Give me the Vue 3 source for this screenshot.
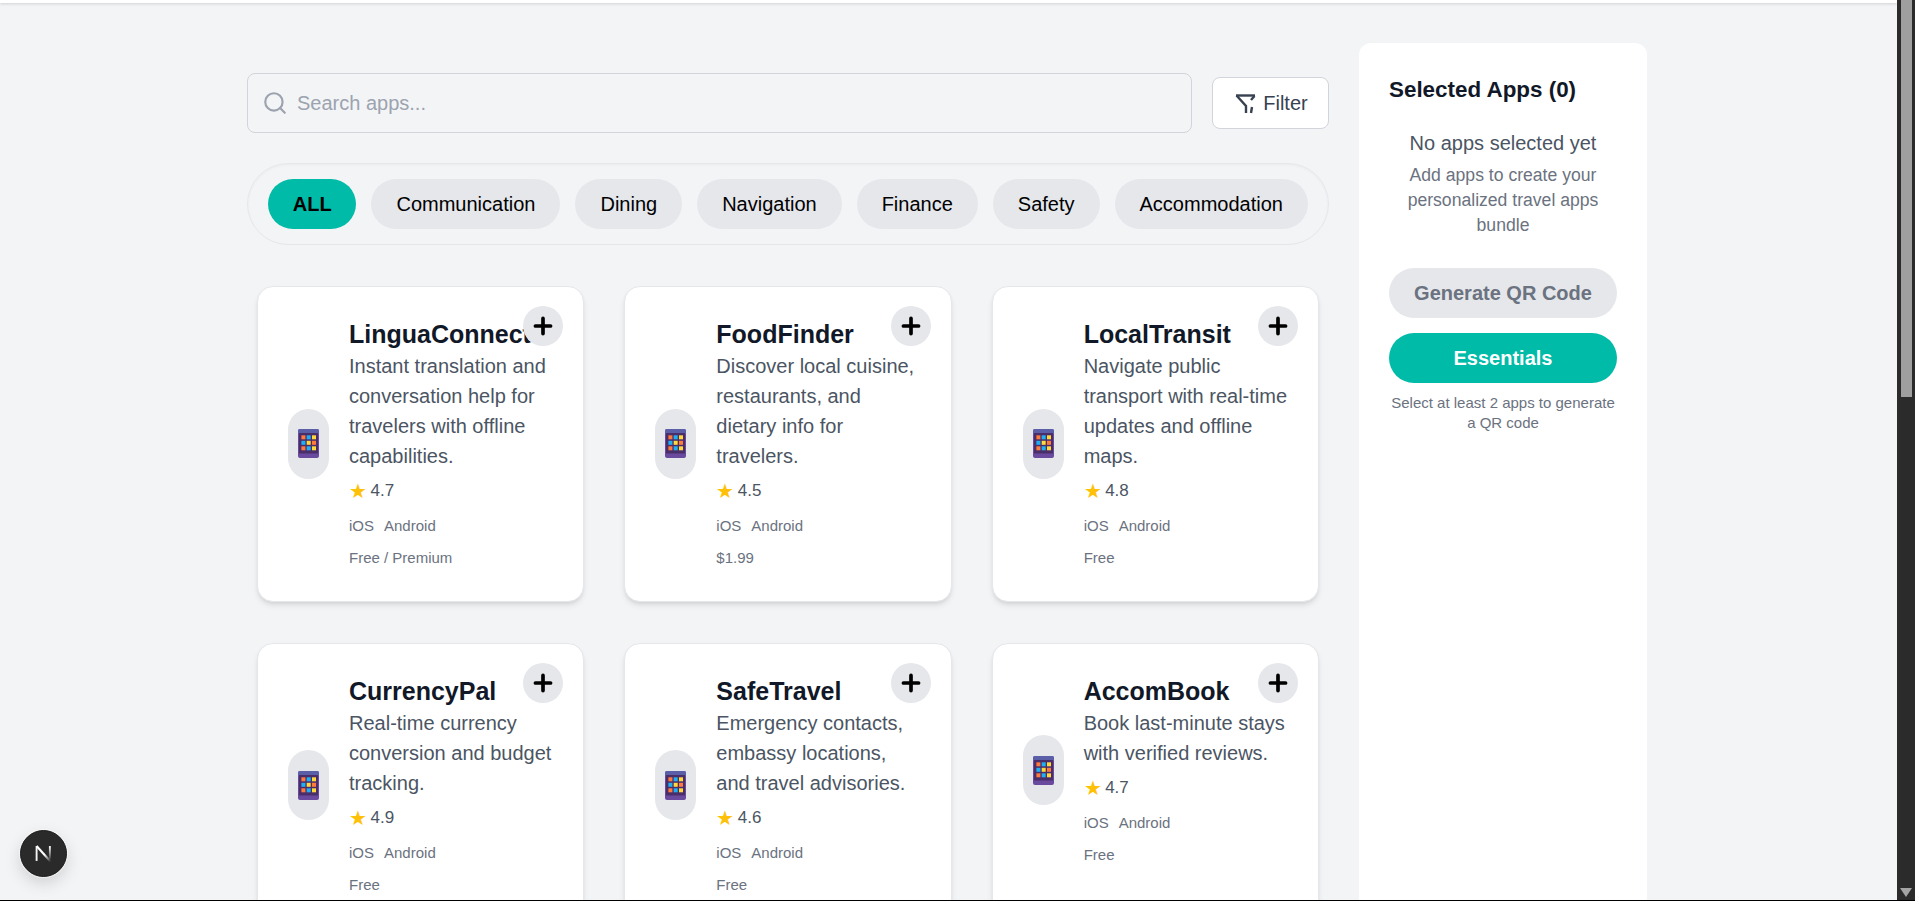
<template>
  <div class="screen">
    <div class="page">
      <div class="topbar"></div>
      <main class="layout">
        <section class="content">
          <div class="search-row">
            <label class="search">
              <svg class="search-icon" viewBox="0 0 24 24" fill="none" stroke="currentColor" stroke-width="2" stroke-linecap="round" stroke-linejoin="round">
                <circle cx="11" cy="11" r="8" />
                <path d="m21 21-4.3-4.3" />
              </svg>
              <input type="text" placeholder="Search apps..." />
            </label>
            <button class="filter">
              <svg viewBox="0 0 24 24" fill="none" stroke="currentColor" stroke-width="2.4">
                <path d="M3 4.5h19" />
                <path d="M3.5 4.5 13 15v7" />
                <path d="M21.5 5 18 9" />
                <path d="M19 16l-1 6" />
              </svg>
              Filter
            </button>
          </div>

          <div class="categories">
            <button
              v-for="(cat, i) in categories"
              :key="cat"
              class="category"
              :class="{ active: i === 0 }"
            >{{ cat }}</button>
          </div>

          <div class="grid">
            <article v-for="app in apps" :key="app.name" class="card">
              <button class="add">
                <svg viewBox="0 0 24 24" fill="none" stroke="currentColor" stroke-width="3.4" stroke-linecap="round">
                  <path d="M5 12h14M12 5v14" />
                </svg>
              </button>
              <div class="card-body">
                <div class="app-icon">
                  <svg viewBox="0 0 21 29" width="21" height="29">
                    <rect width="21" height="29" rx="2" fill="#6a4a9e" />
                    <path d="M0 5V2a2 2 0 0 1 2-2h17a2 2 0 0 1 2 2v3z" fill="#5a5fa8" />
                    <rect x="1" y="4" width="19" height="20.5" fill="#4a2e6a" />
                    <g v-for="(row, r) in tiles" :key="r">
                      <rect
                        v-for="(color, c) in row"
                        :key="c"
                        :x="3.4 + c * 5.3"
                        :y="6.3 + r * 5.5"
                        width="4"
                        height="4"
                        :fill="color"
                      />
                    </g>
                  </svg>
                </div>
                <div class="info">
                  <h3 class="name">{{ app.name }}</h3>
                  <p class="desc">{{ app.desc }}</p>
                  <div class="rating"><span class="star">★</span>{{ app.rating }}</div>
                  <div class="platforms"><span>iOS</span><span>Android</span></div>
                  <div class="price">{{ app.price }}</div>
                </div>
              </div>
            </article>
          </div>
        </section>

        <aside class="sidebar">
          <h2 class="side-title">Selected Apps (0)</h2>
          <div class="empty">
            <p class="empty-title">No apps selected yet</p>
            <p class="empty-text">Add apps to create your personalized travel apps bundle</p>
          </div>
          <button class="side-btn disabled">Generate QR Code</button>
          <button class="side-btn primary">Essentials</button>
          <p class="hint">Select at least 2 apps to generate a QR code</p>
        </aside>
      </main>
    </div>

    <div class="scrollbar">
      <div class="thumb"></div>
      <div class="arrow"></div>
    </div>

    <div class="next-badge">
      <svg viewBox="0 0 16 16" width="17" height="17" fill="none">
        <defs>
          <linearGradient id="nfade" x1="4" y1="3" x2="14" y2="15" gradientUnits="userSpaceOnUse">
            <stop offset="0.5" stop-color="#fff" />
            <stop offset="1" stop-color="#fff" stop-opacity="0.1" />
          </linearGradient>
          <linearGradient id="nfade2" x1="14" y1="1" x2="14" y2="13" gradientUnits="userSpaceOnUse">
            <stop offset="0" stop-color="#fff" />
            <stop offset="1" stop-color="#fff" stop-opacity="0.15" />
          </linearGradient>
        </defs>
        <path d="M1.5 1v14" stroke="#f2f2f2" stroke-width="1.8" />
        <path d="M1.5 1 14.5 15.5" stroke="url(#nfade)" stroke-width="2" />
        <path d="M14 1v12" stroke="url(#nfade2)" stroke-width="1.8" />
      </svg>
    </div>
  </div>
</template>

<script setup>
const categories = ['ALL', 'Communication', 'Dining', 'Navigation', 'Finance', 'Safety', 'Accommodation']

const tiles = [
  ['#ff7a3d', '#1eb0f5', '#ffd83a'],
  ['#1eb0f5', '#ffd83a', '#ff7a3d'],
  ['#ff7a3d', '#1eb0f5', '#ffd83a']
]

const apps = [
  {
    name: 'LinguaConnect',
    desc: 'Instant translation and conversation help for travelers with offline capabilities.',
    rating: 4.7,
    price: 'Free / Premium'
  },
  {
    name: 'FoodFinder',
    desc: 'Discover local cuisine, restaurants, and dietary info for travelers.',
    rating: 4.5,
    price: '$1.99'
  },
  {
    name: 'LocalTransit',
    desc: 'Navigate public transport with real-time updates and offline maps.',
    rating: 4.8,
    price: 'Free'
  },
  {
    name: 'CurrencyPal',
    desc: 'Real-time currency conversion and budget tracking.',
    rating: 4.9,
    price: 'Free'
  },
  {
    name: 'SafeTravel',
    desc: 'Emergency contacts, embassy locations, and travel advisories.',
    rating: 4.6,
    price: 'Free'
  },
  {
    name: 'AccomBook',
    desc: 'Book last-minute stays with verified reviews.',
    rating: 4.7,
    price: 'Free'
  }
]
</script>

<style>
html,
body {
  margin: 0;
  height: 100%;
  overflow: hidden;
}
</style>

<style scoped>
.screen {
  display: flex;
  height: 900px;
  border-bottom: 1px solid #000;
  overflow: hidden;
  background: #f3f4f6;
  font-family: "Liberation Sans", Arial, sans-serif;
}

.page {
  flex: 1;
  min-width: 0;
  overflow: hidden;
}

.topbar {
  height: 3px;
  background: #fff;
  box-shadow: 0 1px 3px rgba(0, 0, 0, 0.15);
}

.layout {
  display: flex;
  gap: 30px;
  width: 1400px;
  margin-left: 247px;
  padding-top: 40px;
}

.content {
  width: 1082px;
  flex: none;
}

.search-row {
  display: flex;
  align-items: center;
  gap: 20px;
  padding-top: 30px;
}

.search {
  flex: 1;
  height: 60px;
  box-sizing: border-box;
  display: flex;
  align-items: center;
  gap: 9px;
  padding-left: 14px;
  border: 1px solid #d1d5db;
  border-radius: 8px;
}

.search-icon {
  width: 26px;
  height: 26px;
  color: #9ca3af;
  flex: none;
}

.search input {
  flex: 1;
  border: none;
  outline: none;
  padding: 0 2px 0 0;
  background: transparent;
  font-family: inherit;
  font-size: 20px;
  color: #111827;
}

.search input::placeholder {
  color: #9ca3af;
}

.filter {
  width: 117px;
  height: 52px;
  display: flex;
  align-items: center;
  justify-content: center;
  gap: 6px;
  padding: 0;
  background: #fff;
  border: 1px solid #d1d5db;
  border-radius: 8px;
  font-family: inherit;
  font-size: 20px;
  color: #374151;
}

.filter svg {
  width: 24px;
  height: 24px;
}

.categories {
  display: flex;
  gap: 15px;
  margin-top: 30px;
  padding: 15px 20px;
  border: 1px solid #e5e7eb;
  border-radius: 41px;
  background: #f3f4f6;
  box-shadow: inset 0 1px 3px rgba(0, 0, 0, 0.04);
}

.category {
  height: 50px;
  padding: 0 25px;
  border: none;
  border-radius: 25px;
  background: #e5e7eb;
  font-family: inherit;
  font-size: 20px;
  color: #000;
  white-space: nowrap;
}

.category.active {
  padding: 0 24.8px;
  background: #00bba7;
  font-weight: 700;
}

.grid {
  display: grid;
  grid-template-columns: repeat(3, 1fr);
  column-gap: 40px;
  row-gap: 40.5px;
  padding: 41px 10px 0;
}

.card {
  position: relative;
  box-sizing: border-box;
  padding: 30px 30px 31px 30px;
  background: #fff;
  border: 1px solid #e5e7eb;
  border-radius: 16px;
  box-shadow: 0 4px 6px -1px rgba(0, 0, 0, 0.1), 0 2px 4px -2px rgba(0, 0, 0, 0.1);
}

.card-body {
  display: flex;
  align-items: center;
  gap: 20px;
}

.add {
  position: absolute;
  top: 19px;
  right: 20px;
  width: 40px;
  height: 40px;
  padding: 0;
  display: flex;
  align-items: center;
  justify-content: center;
  border: none;
  border-radius: 50%;
  background: #e5e7eb;
  color: #000;
}

.add svg {
  width: 26px;
  height: 26px;
}

.app-icon {
  flex: none;
  width: 41px;
  height: 70px;
  display: flex;
  align-items: center;
  justify-content: center;
  border-radius: 21px;
  background: #e5e7eb;
}

.info {
  flex: 1;
  min-width: 0;
}

.name {
  margin: 0;
  font-size: 25px;
  line-height: 34px;
  font-weight: 700;
  color: #111827;
  white-space: nowrap;
}

.desc {
  margin: 0;
  font-size: 20px;
  line-height: 30px;
  color: #4b5563;
}

.rating {
  display: flex;
  align-items: center;
  margin-top: 7px;
  font-size: 17px;
  line-height: 26px;
  color: #4b5563;
}

.star {
  width: 21.5px;
  color: #ffc107;
  font-size: 20px;
}

.platforms {
  display: flex;
  gap: 10px;
  margin-top: 11px;
  font-size: 15px;
  line-height: 22px;
  color: #6b7280;
}

.price {
  margin-top: 8px;
  font-size: 15px;
  line-height: 25px;
  color: #6b7280;
}

.sidebar {
  width: 288px;
  flex: none;
  box-sizing: border-box;
  min-height: 900px;
  padding: 30px;
  background: #fff;
  border-radius: 12px;
}

.side-title {
  margin: 0;
  font-size: 22.4px;
  line-height: 34px;
  font-weight: 700;
  color: #111827;
}

.empty {
  margin-top: 21px;
  text-align: center;
}

.empty-title {
  margin: 0;
  font-size: 20px;
  line-height: 30px;
  color: #4b5563;
}

.empty-text {
  margin: 5px 0 0;
  font-size: 17.6px;
  line-height: 25px;
  color: #6b7280;
}

.side-btn {
  display: block;
  width: 100%;
  height: 50px;
  border: none;
  border-radius: 25px;
  font-family: inherit;
  font-size: 20px;
  font-weight: 700;
}

.side-btn.disabled {
  margin-top: 30px;
  background: #e5e7eb;
  color: #6b7280;
}

.side-btn.primary {
  margin-top: 15px;
  background: #00bba7;
  color: #fff;
}

.hint {
  margin: 10px 0 0;
  font-size: 15px;
  line-height: 20px;
  text-align: center;
  color: #6b7280;
}

.scrollbar {
  position: relative;
  width: 18px;
  flex: none;
  background: #2b2b2b;
}

.thumb {
  width: 11px;
  height: 397px;
  margin-left: 4px;
  background: #9f9f9f;
}

.arrow {
  position: absolute;
  left: 3px;
  bottom: 3px;
  width: 0;
  height: 0;
  border-left: 6px solid transparent;
  border-right: 6px solid transparent;
  border-top: 9px solid #a3a3a3;
}

.next-badge {
  position: fixed;
  left: 20px;
  top: 830px;
  width: 47px;
  height: 47px;
  box-sizing: border-box;
  display: flex;
  align-items: center;
  justify-content: center;
  border-radius: 50%;
  background: #2a2a2a;
  border: 1px solid #1a1a1a;
  box-shadow: 0 0 0 1px rgba(255, 255, 255, 0.5), 0 6px 16px rgba(0, 0, 0, 0.15);
}
</style>
